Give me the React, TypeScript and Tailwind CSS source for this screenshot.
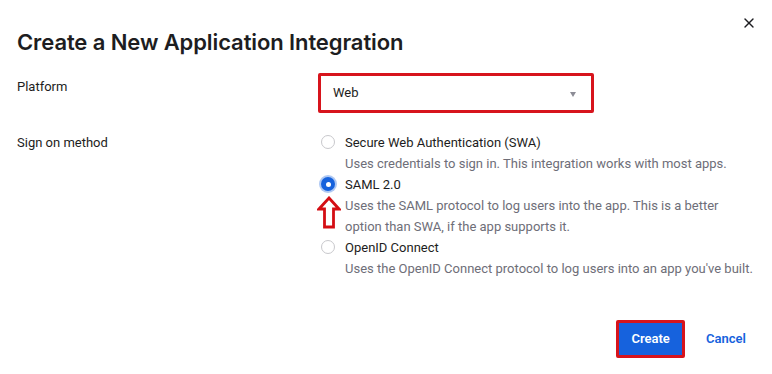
import { X } from "lucide-react";

const font = { fontFamily: "Roboto, 'Noto Sans', sans-serif" };
const titleFont = { fontFamily: "Inter, 'Noto Sans', sans-serif" };

function Radio({ checked }: { checked?: boolean }) {
  if (checked) {
    return (
      <span className="mt-[3px] flex h-[14px] w-[14px] shrink-0 items-center justify-center rounded-full bg-[#1662dd] shadow-[0_0_0_2px_rgba(22,98,221,0.35)]">
        <span className="h-[5px] w-[5px] rounded-full bg-white" />
      </span>
    );
  }
  return <span className="mt-[3px] h-[14px] w-[14px] shrink-0 rounded-full border border-[#c8c8cc] bg-white" />;
}

function Option({
  checked,
  title,
  lines,
  arrow,
}: {
  checked?: boolean;
  title: string;
  lines: string[];
  arrow?: boolean;
}) {
  return (
    <div className="relative flex gap-[10px] pl-[2px]">
      <Radio checked={checked} />
      {arrow && (
        <svg className="absolute left-[-2px] top-[22px]" width="24" height="33" viewBox="0 0 24 33">
          <path d="M12 2 L22 13 L16.5 13 L16.5 31 L7.5 31 L7.5 13 L2 13 Z" fill="white" stroke="#d40e14" strokeWidth="2.8" strokeLinejoin="miter" />
        </svg>
      )}
      <div className="leading-[21px]">
        <div className="text-[13px] text-[#1d1d21]">{title}</div>
        {lines.map((l) => (
          <div key={l} className="text-[13px] text-[#6e6e78]">
            {l}
          </div>
        ))}
      </div>
    </div>
  );
}

export default function App() {
  return (
    <div style={font} className="relative h-[374px] w-[772px] bg-white">
      <button className="absolute right-[15px] top-[15px] text-[#1d1d21]">
        <X className="h-[16px] w-[16px]" strokeWidth={2} />
      </button>
      <h1
        style={titleFont}
        className="px-[17px] pt-[28px] text-[22px] font-semibold leading-[28px] tracking-[-0.1px] text-[#1d1d21]"
      >
        Create a New Application Integration
      </h1>

      <div className="mt-[17px] grid grid-cols-[301px_1fr] px-[17px]">
        <div className="pt-[4px] text-[13px] leading-[20px] text-[#1d1d21]">Platform</div>
        <div>
          <div className="w-[276px] rounded-[2px] border-[3px] border-[#d7141c] p-[2px]">
            <div className="flex h-[30px] items-center justify-between bg-white px-[10px] text-[13px] text-[#1d1d21]">
              <span>Web</span>
              <span className="mr-[3px] mt-[3px] h-0 w-0 border-x-[3.5px] border-t-[5px] border-x-transparent border-t-[#8c8c96]" />
            </div>
          </div>
        </div>

        <div className="pt-[20px] text-[13px] leading-[20px] text-[#1d1d21]">Sign on method</div>
        <div className="flex flex-col pt-[19px] pl-[1px]">
          <Option
            title="Secure Web Authentication (SWA)"
            lines={["Uses credentials to sign in. This integration works with most apps."]}
          />
          <Option
            checked
            arrow
            title="SAML 2.0"
            lines={["Uses the SAML protocol to log users into the app. This is a better", "option than SWA, if the app supports it."]}
          />
          <Option
            title="OpenID Connect"
            lines={["Uses the OpenID Connect protocol to log users into an app you've built."]}
          />
        </div>
      </div>

      <div className="mt-[41px] flex items-center justify-end gap-[21px] pr-[26px]">
        <div className="rounded-[2px] border-[3px] border-[#d7141c]">
          <button className="h-[32px] w-[63px] bg-[#1662dd] text-[13px] font-semibold text-white">Create</button>
        </div>
        <button className="text-[13px] font-semibold text-[#1662dd]">Cancel</button>
      </div>
    </div>
  );
}
